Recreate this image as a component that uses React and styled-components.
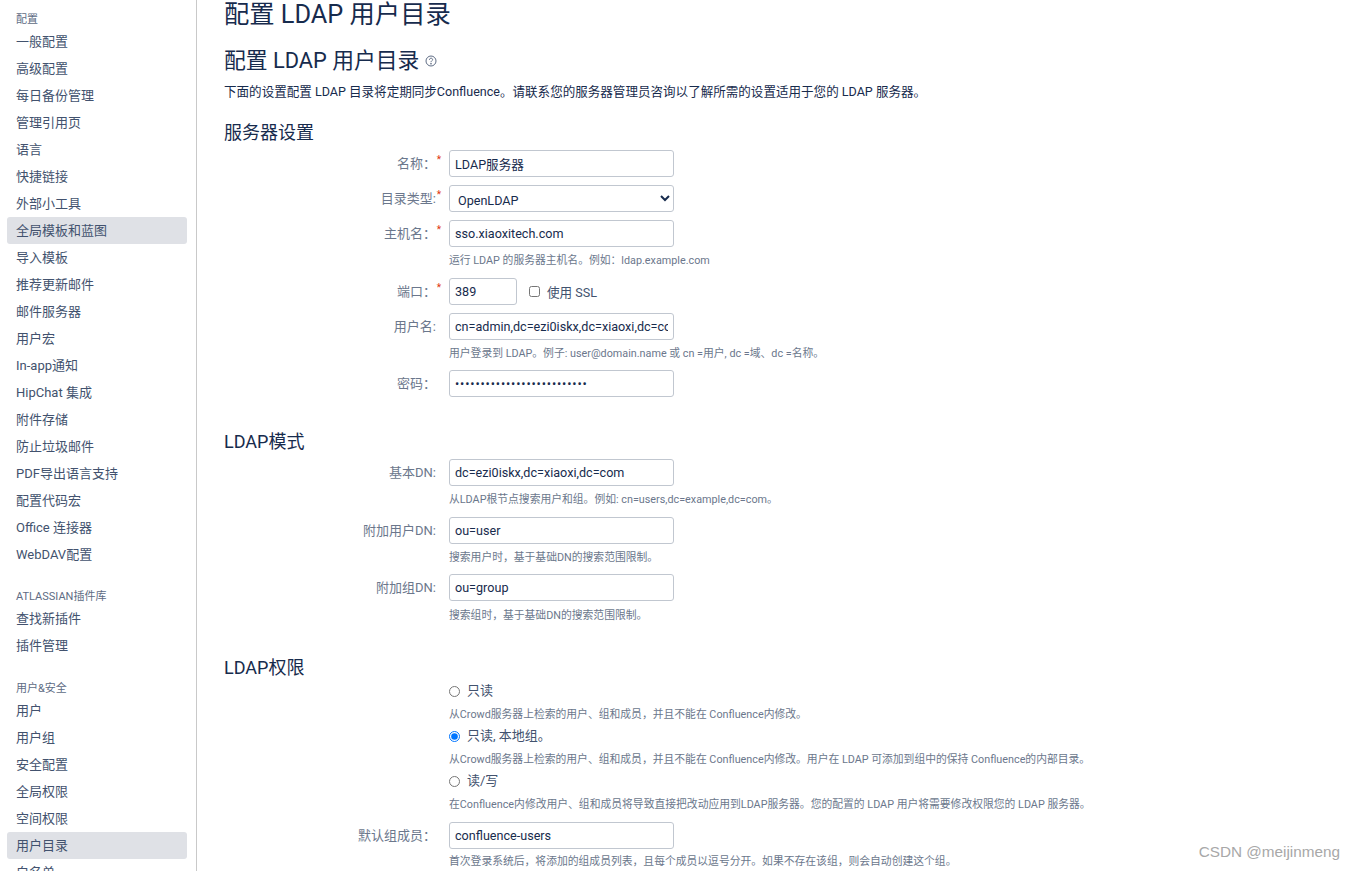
import React from "react";
import styled, { createGlobalStyle } from "styled-components";

// fullwidth punctuation, the labels and hints use these
const COLON = "\uFF1A";
const COMMA = "\uFF0C";

const GlobalStyle = createGlobalStyle`
  html, body {
    margin: 0;
    padding: 0;
    background: #fff;
    overflow: hidden;
  }
  body, input, select {
    font-family: Roboto, "Noto Sans CJK SC", sans-serif;
  }
`;

const Page = styled.div`
  display: flex;
  height: 871px;
  overflow: hidden;
  position: relative;
  color: #172b4d;
`;

const Sidebar = styled.nav`
  width: 180px;
  flex-shrink: 0;
  height: 871px;
  overflow: hidden;
  border-right: 1px solid #c9c9c9;
  padding: 12px 9px 0 7px;
`;

const NavGroup = styled.div`
  margin-bottom: 21px;
  &:nth-child(2) {
    margin-bottom: 22px;
  }
`;

const NavHeading = styled.div`
  font-size: 11px;
  line-height: 14px;
  color: #5e6c84;
  padding: 1px 0 0 9px;
  margin-bottom: 1px;
`;

const NavItem = styled.div`
  height: 27px;
  padding-left: 9px;
  line-height: 27px;
  font-size: 13px;
  border-radius: 3px;
  color: #42526e;
  background: ${(p) => (p.$active ? "#dfe1e6" : "transparent")};
`;

const Main = styled.main`
  flex: 1;
  padding-left: 27px;
`;

const Title = styled.h1`
  margin: 0;
  font-size: 25.3px;
  line-height: 30px;
  font-weight: 400;
`;

const SubTitle = styled.h2`
  margin: 17px 0 0;
  font-size: 21.8px;
  line-height: 28px;
  font-weight: 400;
  display: flex;
  align-items: center;
  gap: 6px;
`;

const Description = styled.p`
  margin: 8px 0 0;
  font-size: 12.55px;
  line-height: 18px;
`;

const SectionTitle = styled.h3`
  margin: ${(p) => p.$top}px 0 0;
  font-size: 18px;
  line-height: 26px;
  font-weight: 400;
`;

const Row = styled.div`
  display: grid;
  grid-template-columns: 225px 1fr;
  margin-top: ${(p) => p.$top}px;
`;

const Label = styled.label`
  font-size: 13px;
  line-height: 26px;
  padding: 1px 13px 0 0;
  color: #6b778c;
  text-align: right;
  position: relative;
`;

const Required = styled.span`
  position: absolute;
  right: 8px;
  top: -3px;
  color: #de350b;
  font-size: 10px;
`;

const Field = styled.input`
  width: ${(p) => p.$width || 225}px;
  height: 27px;
  box-sizing: border-box;
  border: 1px solid #c1c7d0;
  border-radius: 3px;
  padding: 0 5px;
  font-size: 12.6px;
  color: #172b4d;
  background: #fff;
  outline: none;
  display: block;
  &[type="password"] {
    letter-spacing: 0.85px;
  }
`;

const Dropdown = styled.select`
  width: 225px;
  height: 27px;
  box-sizing: border-box;
  border: 1px solid #c1c7d0;
  border-radius: 3px;
  padding: 3px 4px 0;
  font-size: 12.6px;
  color: #172b4d;
  background: #fff;
  display: block;
`;

const Inline = styled.div`
  display: flex;
  align-items: center;
`;

const CheckLabel = styled.label`
  display: flex;
  align-items: center;
  font-size: 12.6px;
  margin-left: 12px;
  gap: 7px;
  color: #42526e;
  input {
    margin: 0;
    width: 11px;
    height: 11px;
  }
`;

const Hint = styled.div`
  grid-column: 2;
  font-size: 10.8px;
  line-height: 14px;
  color: #6b778c;
  margin-top: ${(p) => p.$top ?? 7}px;
  white-space: nowrap;
`;

const RadioRow = styled.label`
  grid-column: 2;
  display: flex;
  align-items: center;
  gap: 7px;
  font-size: 13px;
  line-height: 18px;
  color: #42526e;
  margin-top: ${(p) => p.$top ?? 0}px;
  input {
    margin: 0;
    width: 11px;
    height: 11px;
  }
`;

const Watermark = styled.div`
  position: absolute;
  right: 15px;
  bottom: 10px;
  font-family: "Liberation Sans", sans-serif;
  font-size: 15.3px;
  line-height: 18px;
  color: #a8a8a8;
`;

const navGroups = [
  {
    heading: "配置",
    items: ["一般配置", "高级配置", "每日备份管理", "管理引用页", "语言", "快捷链接", "外部小工具", "全局模板和蓝图", "导入模板", "推荐更新邮件", "邮件服务器", "用户宏", "In-app通知", "HipChat 集成", "附件存储", "防止垃圾邮件", "PDF导出语言支持", "配置代码宏", "Office 连接器", "WebDAV配置"],
  },
  { heading: "ATLASSIAN插件库", items: ["查找新插件", "插件管理"] },
  { heading: "用户&安全", items: ["用户", "用户组", "安全配置", "全局权限", "空间权限", "用户目录", "白名单"] },
];

const activeItems = ["全局模板和蓝图", "用户目录"];

function HelpIcon() {
  return (
    <svg width="12" height="12" viewBox="0 0 12 12" fill="none" stroke="#5e6c84" strokeWidth="1">
      <circle cx="6" cy="6" r="5" />
      <path d="M4.4 4.8c0-2.1 3.2-2.1 3.2-.2 0 1.2-1.6 1.2-1.6 2.6" />
      <circle cx="6" cy="8.8" r=".4" fill="#5e6c84" />
    </svg>
  );
}

function FormRow({ label, required, top, children }) {
  return (
    <Row $top={top}>
      <Label>
        {label}
        {required ? <Required>*</Required> : null}
      </Label>
      <div>{children}</div>
    </Row>
  );
}

export default function App() {
  return (
    <Page>
      <GlobalStyle />
      <Sidebar>
        {navGroups.map((group) => (
          <NavGroup key={group.heading}>
            <NavHeading>{group.heading}</NavHeading>
            {group.items.map((item) => (
              <NavItem key={item} $active={activeItems.includes(item)}>
                {item}
              </NavItem>
            ))}
          </NavGroup>
        ))}
      </Sidebar>

      <Main>
        <Title>配置 LDAP 用户目录</Title>
        <SubTitle>
          配置 LDAP 用户目录 <HelpIcon />
        </SubTitle>
        <Description>下面的设置配置 LDAP 目录将定期同步Confluence。请联系您的服务器管理员咨询以了解所需的设置适用于您的 LDAP 服务器。</Description>

        <SectionTitle $top={19}>服务器设置</SectionTitle>
        <FormRow label={`名称${COLON}`} required top={4}>
          <Field readOnly value="LDAP服务器" />
        </FormRow>
        <FormRow label="目录类型:" required top={8}>
          <Dropdown defaultValue="OpenLDAP">
            <option>OpenLDAP</option>
          </Dropdown>
        </FormRow>
        <FormRow label={`主机名${COLON}`} required top={8}>
          <Field readOnly value="sso.xiaoxitech.com" />
        </FormRow>
        <Row $top={0}>
          <Hint>{`运行 LDAP 的服务器主机名。例如${COLON}ldap.example.com`}</Hint>
        </Row>
        <FormRow label={`端口${COLON}`} required top={10}>
          <Inline>
            <Field readOnly value="389" $width={68} />
            <CheckLabel>
              <input type="checkbox" readOnly />
              使用 SSL
            </CheckLabel>
          </Inline>
        </FormRow>
        <FormRow label="用户名:" top={8}>
          <Field readOnly value="cn=admin,dc=ezi0iskx,dc=xiaoxi,dc=com" />
        </FormRow>
        <Row $top={0}>
          <Hint>用户登录到 LDAP。例子: user@domain.name 或 cn =用户, dc =域、dc =名称。</Hint>
        </Row>
        <FormRow label={`密码${COLON}`} top={9}>
          <Field readOnly type="password" value="abcdefghijklmnopqrstuvwxyz" />
        </FormRow>

        <SectionTitle $top={32}>LDAP模式</SectionTitle>
        <FormRow label="基本DN:" top={4}>
          <Field readOnly value="dc=ezi0iskx,dc=xiaoxi,dc=com" />
        </FormRow>
        <Row $top={0}>
          <Hint>从LDAP根节点搜索用户和组。例如: cn=users,dc=example,dc=com。</Hint>
        </Row>
        <FormRow label="附加用户DN:" top={10}>
          <Field readOnly value="ou=user" />
        </FormRow>
        <Row $top={0}>
          <Hint>{`搜索用户时${COMMA}基于基础DN的搜索范围限制。`}</Hint>
        </Row>
        <FormRow label="附加组DN:" top={9}>
          <Field readOnly value="ou=group" />
        </FormRow>
        <Row $top={0}>
          <Hint $top={8}>{`搜索组时${COMMA}基于基础DN的搜索范围限制。`}</Hint>
        </Row>

        <SectionTitle $top={32}>LDAP权限</SectionTitle>
        <Row $top={1}>
          <RadioRow>
            <input type="radio" name="perm" readOnly />
            只读
          </RadioRow>
          <Hint $top={8}>{`从Crowd服务器上检索的用户、组和成员${COMMA}并且不能在 Confluence内修改。`}</Hint>
          <RadioRow $top={5}>
            <input type="radio" name="perm" readOnly checked />
            只读, 本地组。
          </RadioRow>
          <Hint $top={8}>{`从Crowd服务器上检索的用户、组和成员${COMMA}并且不能在 Confluence内修改。用户在 LDAP 可添加到组中的保持 Confluence的内部目录。`}</Hint>
          <RadioRow $top={5}>
            <input type="radio" name="perm" readOnly />
            读/写
          </RadioRow>
          <Hint $top={8}>在Confluence内修改用户、组和成员将导致直接把改动应用到LDAP服务器。您的配置的 LDAP 用户将需要修改权限您的 LDAP 服务器。</Hint>
        </Row>
        <FormRow label={`默认组成员${COLON}`} top={10}>
          <Field readOnly value="confluence-users" />
        </FormRow>
        <Row $top={0}>
          <Hint $top={6}>{`首次登录系统后${COMMA}将添加的组成员列表${COMMA}且每个成员以逗号分开。如果不存在该组${COMMA}则会自动创建这个组。`}</Hint>
        </Row>
      </Main>
      <Watermark>CSDN @meijinmeng</Watermark>
    </Page>
  );
}
